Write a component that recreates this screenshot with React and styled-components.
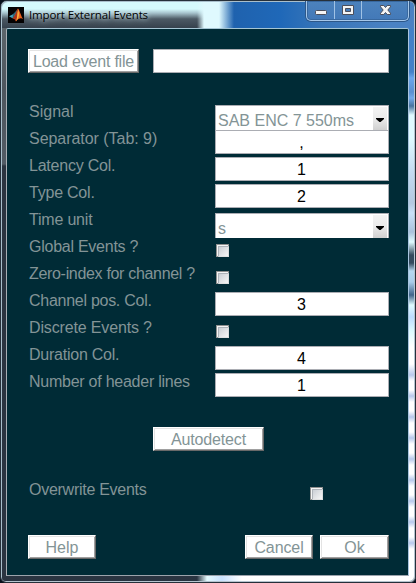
import React from "react";
import styled, { createGlobalStyle, css } from "styled-components";

const Global = createGlobalStyle`
  * { box-sizing: border-box; }
  body { margin: 0; background: #07101c; overflow: hidden; }
`;

const Frame = styled.div`
  width: 416px;
  height: 583px;
  display: flex;
  flex-direction: column;
  padding: 0 6px 6px 5px;
  border: 1px solid #26303a;
  border-radius: 7px 7px 6px 6px;
  font-family: "Liberation Sans", Arial, sans-serif;
  font-size: 16px;
  overflow: hidden;
  box-shadow: inset 1px 1px 0 #a9bfcc, inset -1px -1px 0 #b5c4cf;
  background:
    linear-gradient(90deg, #2a3441 0 197px, #e4fafe 207px, #c9e2ff 222px, #fff 242px) 0 575px / 100% 8px no-repeat,
    linear-gradient(180deg, #4382c8 0 44px, #6ba7ec 50px, #5a90d0 64px, #73aaea 70px, #48749f 78px, #dffaff 87px,
      #dffaff 110px, #c3daf0 145px, #b3c9e0 175px, #c9e2f8 185px, #a9c2dc 204px, #dffcff 214px, #344b5e 227px 235px,
      #b5d8f0 243px, #a9cdea 254px, #40658a 267px, #dffcff 277px, #bcdcff 289px, #dcfbff 303px, #fff 319px 336px,
      #b7c8ec 347px, #fff 353px 362px, #b7c8ec 368px, #fff 374px 383px, #b7c8ec 389px, #fff 395px 404px,
      #b7c8ec 410px, #fff 416px 425px, #b7c8ec 431px, #fff 437px 446px, #b7c8ec 452px, #fff 458px 467px,
      #b7c8ec 473px, #fff 479px 488px, #b7c8ec 494px, #fff 500px 509px, #b7c8ec 515px, #fff 521px)
      407px 28px / 9px 547px no-repeat,
    linear-gradient(180deg, #5c656b 0, #4e565e 60px, #525b65 136px, #2b3440 138px, #2a3441 100%) 0 28px / 8px 547px no-repeat,
    linear-gradient(90deg, transparent 197px, #dff9fe 204px, #dff9fe 219px, #1f62ae 234px, #1f68b8 280px, #3875b8 320px, #4a82c3 390px) 0 0 / 100% 28px no-repeat,
    linear-gradient(180deg, #d5fafd 0 9px, #a7c3cd 13px, #4c5964 19px, #36414d 28px) 0 0 / 230px 28px no-repeat,
    #2a3441;
  background-origin: border-box;
`;

const TitleBar = styled.header`
  display: flex;
  height: 27px;
  flex: none;
  align-items: flex-start;
`;

const Logo = styled.svg`
  width: 16px;
  height: 16px;
  margin: 6px 5px 0 2px;
  flex: none;
`;

const Title = styled.h1`
  flex: 1;
  margin: 5px 0 0;
  font: 400 11.5px/18px "Open Sans", "Noto Sans", sans-serif;
  letter-spacing: -0.13px;
  color: #000;
  white-space: nowrap;
  text-shadow: 0 0 5px rgba(225, 250, 255, 0.8), 0 0 9px rgba(225, 250, 255, 0.6);
`;

const Caption = styled.div`
  display: flex;
  width: 103px;
  height: 20px;
  border: 1px solid #a6c7e9;
  border-top: 0;
  border-radius: 0 0 5px 5px;
  box-shadow: 0 0 0 1px #2d5788, inset 0 0 0 1px #38689f;
  background: linear-gradient(#4c82bd, #4379b8);
`;

const CaptionButton = styled.button`
  width: ${(p) => p.$width}px;
  height: 18px;
  padding: 0;
  border: 0;
  border-left: ${(p) => (p.$first ? "0" : "1px solid #a0c2e5")};
  background: none;
  display: flex;
  flex: none;
`;

const Client = styled.main`
  width: 403px;
  height: 548px;
  display: flex;
  flex-direction: column;
  padding: 20px 19px 0 21px;
  background: #002b36;
  border: 1px solid #a9b1b8;
  border-color: #a5c5d4 #a9c4df #9ba3ac #a9afb6;
  border-radius: 2px 2px 0 0;
`;

const Line = styled.div`
  display: flex;
  flex: none;
  margin-top: ${(p) => p.$top || 0}px;
`;

const Button = styled.button`
  width: ${(p) => p.$width}px;
  height: 24px;
  margin-left: ${(p) => p.$left || 0}px;
  padding: 1px 0 0;
  border: 1px solid;
  border-color: #fff #696969 #696969 #fff;
  box-shadow: inset 1px 1px 0 #e3e3e3, inset -1px -1px 0 #a0a0a0;
  background: #fff;
  color: #839496;
  font: 16px/20px "Liberation Sans", Arial, sans-serif;
  letter-spacing: ${(p) => p.$track || 0}px;
  white-space: nowrap;
`;

const fieldBox = css`
  border: 1px solid #abadb3;
  background: #fff;
  font: 16px/18px "Liberation Sans", Arial, sans-serif;
`;

const Input = styled.input`
  ${fieldBox}
  width: ${(p) => p.$width || 174}px;
  height: 24px;
  margin: 0 0 0 ${(p) => p.$left || 0}px;
  padding: 2px 1px 0 0;
  border-radius: 0;
  outline: 0;
  text-align: center;
  color: #000;
`;

const Rows = styled.section`
  margin: 30px 0 0 1px;
`;

const Row = styled.div`
  display: grid;
  grid-template-columns: 186px 174px;
  height: 27px;
  align-items: start;
`;

const Label = styled.label`
  line-height: 18px;
  color: #839496;
  letter-spacing: ${(p) => p.$track || 0}px;
  white-space: nowrap;
`;

const Select = styled.div`
  ${fieldBox}
  border-bottom: 0;
  height: 25px;
  margin-top: 2px;
  padding: 6px 0 0 2px;
  display: flex;
  justify-content: space-between;
  color: #839496;
`;

const Arrow = styled.span`
  width: 15px;
  height: 23px;
  margin-top: -5px;
  display: flex;
  justify-content: center;
  border-right: 1px solid #fff;
  background: linear-gradient(#f3f3f3, #ebebeb 50%, #d0d0d0);
  &::after {
    content: "";
    width: 8px;
    height: 4px;
    margin-top: 11px;
    background: #000;
    clip-path: polygon(0 0, 100% 0, 100% 25%, 57% 100%, 43% 100%, 0 25%);
  }
`;

const Check = styled.span`
  width: 13px;
  height: 13px;
  margin: 6px 0 0 1px;
  border: 1px solid #8e8f8f;
  padding: 1px;
  background: #f4f4f4;
  &::after {
    content: "";
    display: block;
    width: 9px;
    height: 9px;
    border: 1px solid;
    border-color: #aeb3b9 #d9dbdd #dfe0e1 #aeb3b9;
    background: linear-gradient(135deg, #cbcfd5, #f6f6f6);
  }
`;

const OverwriteRow = styled.div`
  display: grid;
  grid-template-columns: 280px 14px;
  margin: 30px 0 0 1px;
  align-items: start;
`;

const fields = [
  { label: "Signal", kind: "select", value: "SAB ENC 7 550ms" },
  { label: "Separator (Tab: 9)", value: ",", track: -0.04 },
  { label: "Latency Col.", value: "1", track: -0.22 },
  { label: "Type Col.", value: "2", track: -0.22 },
  { label: "Time unit", kind: "select", value: "s", track: -0.2 },
  { label: "Global Events ?", kind: "check", track: -0.25 },
  { label: "Zero-index for channel ?", kind: "check", track: -0.32 },
  { label: "Channel pos. Col.", value: "3", track: -0.27 },
  { label: "Discrete Events ?", kind: "check", track: -0.15 },
  { label: "Duration Col.", value: "4", track: -0.24 },
  { label: "Number of header lines", value: "1", track: -0.25 },
];

function Field({ kind, value }) {
  if (kind === "select") return <Select>{value}<Arrow /></Select>;
  if (kind === "check") return <Check />;
  return <Input defaultValue={value} />;
}

const glyph = { fill: "#f4f4f4", stroke: "#4c4f5c", strokeWidth: 1 };

export default function App() {
  return (
    <>
      <Global />
      <Frame>
        <TitleBar>
          <Logo viewBox="0 0 16 16">
            <path d="M0 0h16v16H0z" fill="#050304" />
            <path d="M1 9.3 5 7.2 8.4 5 6.8 9.3 4.5 11.3z" fill="#45a3bd" />
            <path d="M5 7.2 10 1.8 6.8 9.3 4.5 11.3z" fill="#2b6478" />
            <path d="M10 1.5C11.5 3 13 9 15.2 12.2 12.8 10.4 10.6 11.5 8 14.5 7.3 12.5 6 11.3 4.5 11.3 7.3 9.5 8.4 4 10 1.5z" fill="#e8601f" />
            <path d="M10 1.5C10.2 5 9.2 10 8 14.5 7.3 12.5 6 11.3 4.5 11.3 7.3 9.5 8.4 4 10 1.5z" fill="#a8321c" />
            <path d="M10.2 2.4C11.5 7 11.2 10.6 8.3 14 9.6 9 8.9 7 10.2 2.4z" fill="#ffb33b" />
          </Logo>
          <Title>Import External Events</Title>
          <Caption>
            <CaptionButton $width={27} $first aria-label="Minimize">
              <svg width="27" height="18"><rect x="8.5" y="9.5" width="11" height="4" rx="1" {...glyph} /></svg>
            </CaptionButton>
            <CaptionButton $width={27} aria-label="Maximize">
              <svg width="26" height="18">
                <path d="M7.5 4.5h11v9h-11zM10.5 7.5v3h5v-3z" fillRule="evenodd" {...glyph} />
              </svg>
            </CaptionButton>
            <CaptionButton $width={47} aria-label="Close">
              <svg width="46" height="18">
                <path d="M18.5 4.5h3.3l1.7 2 1.7-2h3.3v1.3L25.8 9l2.7 3.2v1.3h-3.3l-1.7-2-1.7 2h-3.3v-1.3L21.2 9l-2.7-3.2z" {...glyph} />
              </svg>
            </CaptionButton>
          </Caption>
        </TitleBar>
        <Client>
          <Line>
            <Button $width={111} $track={-0.2}>Load event file</Button>
            <Input $width={236} $left={14} aria-label="Event file" />
          </Line>
          <Rows>
            {fields.map((f) => (
              <Row key={f.label}>
                <Label $track={f.track}>{f.label}</Label>
                <Field kind={f.kind} value={f.value} />
              </Row>
            ))}
          </Rows>
          <Line $top={27}>
            <Button $width={111} $left={125} $track={-0.15}>Autodetect</Button>
          </Line>
          <OverwriteRow>
            <Label $track={-0.27}>Overwrite Events</Label>
            <Check />
          </OverwriteRow>
          <Line $top={35}>
            <Button $width={68}>Help</Button>
            <Button $width={68} $left={149} $track={-0.1}>Cancel</Button>
            <Button $width={69} $left={7}>Ok</Button>
          </Line>
        </Client>
      </Frame>
    </>
  );
}
